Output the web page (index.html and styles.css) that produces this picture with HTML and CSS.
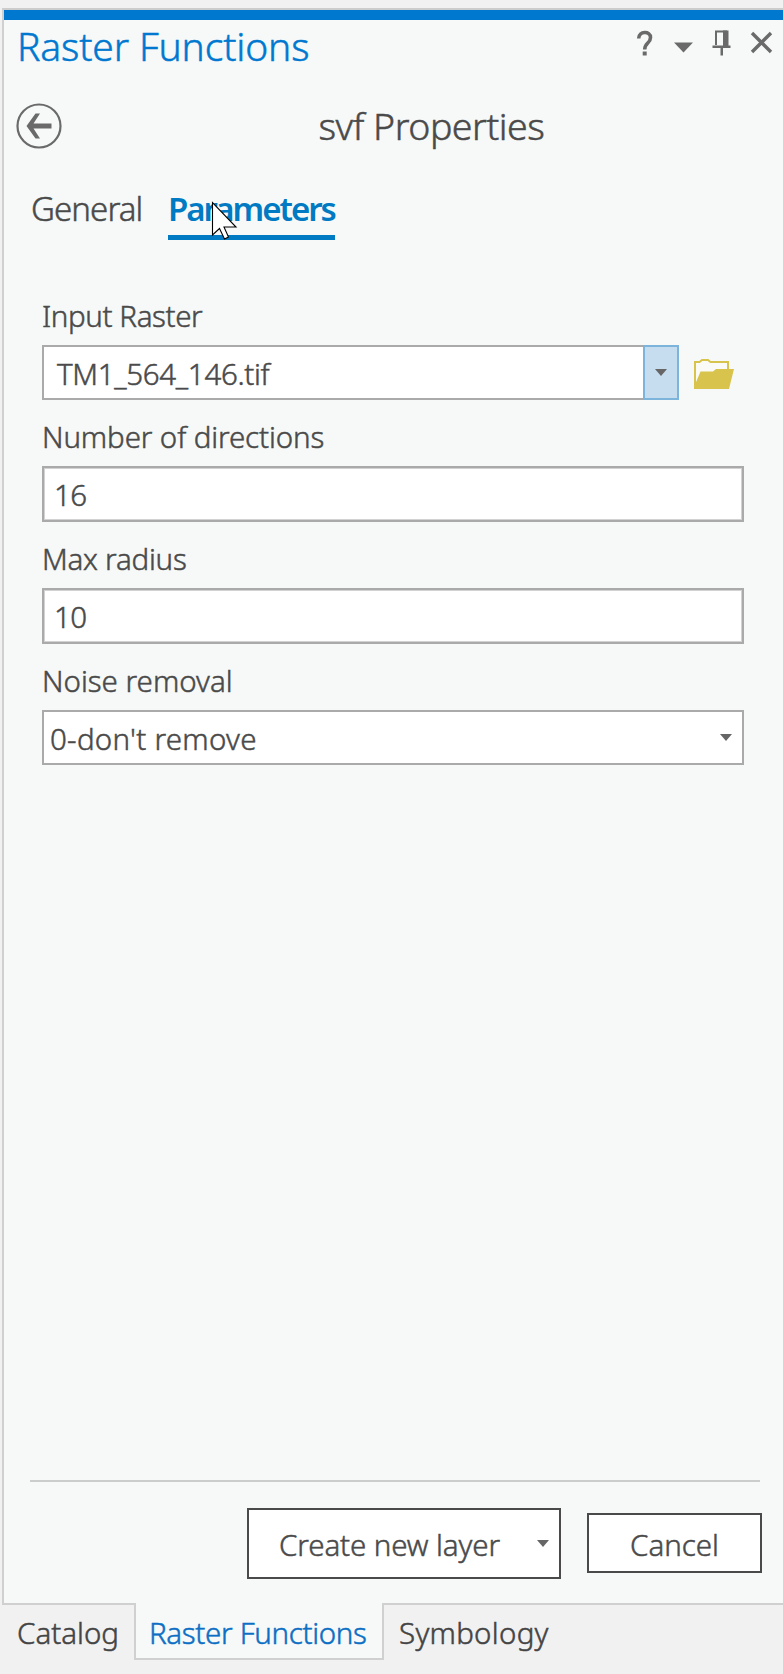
FILE: index.html
```html
<!DOCTYPE html>
<html lang="en">
<head>
<meta charset="utf-8">
<title>Raster Functions</title>
<link rel="stylesheet" href="styles.css">
</head>
<body>
<main class="pane">
  <header class="titlebar">
    <h1 class="pane-title"><span class="t-title">Raster Functions</span></h1>
    <svg class="window-icons" width="146" height="40" viewBox="0 0 146 40">
      <path d="M8.700 10.500C8.700 3 20.500 2.500 20.500 9.500c0 6-5.800 5-5.800 12" fill="none" stroke="#6a6a6a" stroke-width="3.600"/>
      <path d="M12.700 23.500h4v4h-4z" fill="#6a6a6a"/>
      <path d="M44 14.500h19L53.500 24.500z" fill="#6a6a6a"/>
      <path d="M86 17V3.500h10V17" fill="none" stroke="#6a6a6a" stroke-width="2"/>
      <path d="M93 2.500h5.500v15H93z M82.500 17.500h18v2.500h-18z M90.500 19h2.500v8.500h-2.500z" fill="#6a6a6a"/>
      <path d="M122 5l19 19M141 5l-19 19" fill="none" stroke="#6a6a6a" stroke-width="3.400"/>
    </svg>
  </header>
  <div class="subhead">
    <svg class="back" width="46" height="46" viewBox="0 0 46 46">
      <circle cx="23" cy="23" r="21.500" fill="none" stroke="#6a6a6a" stroke-width="2.200"/>
      <path d="M10.500 23L19.500 10.500H24L17.500 20.500H35.500V25.500H17.500L24 35.500H19.500z" fill="#6a6a6a"/>
    </svg>
    <h2 class="subtitle"><span class="t-sub">svf Properties</span></h2>
  </div>
  <nav class="tabs">
    <span class="tab"><span class="t-general">General</span></span>
    <span class="tab tab-active"><span class="t-params">Parameters</span>
      <svg class="cursor" width="28" height="40" viewBox="0 0 28 40">
        <path d="M1.500 1.500V34L8.500 27.500L13.500 38L17.500 36L13 26H25z" fill="#fff" stroke="#000" stroke-width="1.100"/>
      </svg>
    </span>
  </nav>
  <section class="form">
    <div class="label"><span class="t-l1">Input Raster</span></div>
    <div class="raster-row">
      <div class="box combo"><span class="value t-v1">TM1_564_146.tif</span>
        <span class="drop"><svg width="12" height="7" viewBox="0 0 12 7"><path d="M0 0h12L6 7z" fill="#666"/></svg></span>
      </div>
      <svg class="folder" width="40" height="30" viewBox="0 0 40 30">
        <path d="M1 29V3h4.500L8 1h6l2.500 2H34v8" fill="#fafaf6" stroke="#d8c44c" stroke-width="2"/>
        <path d="M0 30V28L6.500 12.500H19L22 10H40L35 30z" fill="#d8c44c"/>
      </svg>
    </div>
    <div class="label"><span class="t-l2">Number of directions</span></div>
    <div class="box input"><span class="value t-num">16</span></div>
    <div class="label"><span class="t-l3">Max radius</span></div>
    <div class="box input"><span class="value t-num">10</span></div>
    <div class="label"><span class="t-l4">Noise removal</span></div>
    <div class="box select"><span class="value t-v4">0-don't remove</span>
      <svg width="12" height="7" viewBox="0 0 12 7"><path d="M0 0h12L6 7z" fill="#666"/></svg>
    </div>
  </section>
  <footer class="actions">
    <div class="button create"><span class="t-create">Create new layer</span>
      <svg width="12" height="7" viewBox="0 0 12 7"><path d="M0 0h12L6 7z" fill="#666"/></svg>
    </div>
    <div class="button cancel"><span class="t-cancel">Cancel</span></div>
  </footer>
</main>
<nav class="dock">
  <span class="dock-tab catalog"><span class="t-cat">Catalog</span></span>
  <span class="dock-tab current"><span class="t-rf">Raster Functions</span></span>
  <span class="dock-tab symbology"><span class="t-sym">Symbology</span></span>
</nav>
</body>
</html>
```
FILE: styles.css
```css
* { box-sizing: border-box; }
body {
  margin: 0;
  width: 783px;
  height: 1674px;
  padding-top: 8px;
  display: flex;
  flex-direction: column;
  overflow: hidden;
  background: #f1f1f1;
  color: #4a4a4a;
  font: 300 29.5px/40px "Noto Sans", "Open Sans", sans-serif;
  -webkit-text-stroke: 0.5px currentColor;
  white-space: nowrap;
}
svg { display: block; flex: none; }
.pane {
  height: 1595px;
  margin-left: 2px;
  border-left: 2px solid #d0d0d0;
  border-top: 2px solid #cccccc;
  background: #f7f9f8;
  display: flex;
  flex-direction: column;
}
.titlebar {
  height: 87px;
  border-top: 10px solid #0078d0;
  padding: 6px 6px 0 13px;
  display: flex;
  justify-content: space-between;
}
.pane-title {
  margin: 0;
  font-size: 39px;
  line-height: 40px;
  font-weight: 300;
  color: #0078d0;
}
.window-icons { margin: 1.5px 1px 0 0; }
.subhead { height: 58px; padding: 6px 0 0 11.5px; display: flex; }
.subtitle {
  flex: 1;
  margin: 0 0 0 257px;
  font-size: 37.5px;
  line-height: 46px;
  font-weight: 300;
}
.tabs { height: 85px; padding: 30px 0 0 27px; display: flex; gap: 27px; }
.tab { height: 55px; font-size: 33px; line-height: 48px; width: 110px; }
.tab-active {
  position: relative;
  width: 167px;
  border-bottom: 5px solid #007ac2;
  color: #007ac2;
  font-weight: 600;
  -webkit-text-stroke: 0;
}
.cursor { position: absolute; left: 43px; top: 16px; }
.form { padding: 56px 39px 0 38px; display: flex; flex-direction: column; }
.label { height: 49px; line-height: 40px; }
.box {
  height: 55px;
  border: 2px solid #aaaaaa;
  background: #fff;
  display: flex;
  align-items: center;
  justify-content: space-between;
  margin-bottom: 17px;
}
.input { height: 56px; padding-left: 10px; box-shadow: inset 0 0 0 1px #d2d2d2; }
.value { position: relative; top: 1px; }
.raster-row { display: flex; }
.combo { width: 637px; padding-left: 13px; }
.drop {
  width: 36px;
  height: 55px;
  margin: -2px;
  border: 2px solid #7cb4dc;
  background: #c6dcef;
  display: flex;
  align-items: center;
  justify-content: center;
}
.folder { margin: 14px 0 0 15px; }
.select { padding: 0 10px 0 6px; }
.actions {
  margin: auto 21px 24px 26px;
  display: grid;
  grid-template-columns: 1fr 314px 175px;
  column-gap: 26px;
  align-items: start;
}
.actions::before {
  content: "";
  grid-column: 1 / -1;
  height: 2px;
  margin: 0 2px 26px 0;
  background: #cbcdcc;
}
.button {
  border: 2px solid #4a4a4a;
  background: #fff;
  display: flex;
  align-items: center;
}
.create { grid-column: 2; height: 71px; padding: 3px 10px 0 30px; justify-content: space-between; }
.create svg { margin-top: -4px; }
.cancel { height: 60px; margin-top: 5px; justify-content: center; padding: 4px 0 0 0; }
.dock { height: 71px; display: flex; color: #444; }
.dock-tab { height: 57px; padding-top: 8px; line-height: 40px; border-top: 2px solid #d0d0d0; }
.catalog { width: 132px; margin-left: 2px; padding-left: 15px; }
.current {
  width: 250px;
  padding-left: 13px;
  border: 2px solid #d0d0d0;
  border-top: 0;
  padding-top: 10px;
  background: #f7f9f8;
  color: #0c6fc4;
}
.symbology { flex: 1; padding-left: 15px; }

/* Per-string tracking */
.t-title { letter-spacing: -0.14px; }
.t-sub { letter-spacing: -0.48px; }
.t-general { letter-spacing: -0.9px; }
.t-params { letter-spacing: -2px; }
.t-l1 { letter-spacing: -0.39px; }
.t-v1 { letter-spacing: -0.32px; }
.t-l2 { letter-spacing: -0.12px; }
.t-l3 { letter-spacing: -0.24px; }
.t-v4 { letter-spacing: 0.27px; }
.t-num { letter-spacing: -0.6px; }
.t-create { letter-spacing: -0.1px; }
.t-rf { letter-spacing: -0.33px; }
.t-sym { letter-spacing: 0.28px; }
```
